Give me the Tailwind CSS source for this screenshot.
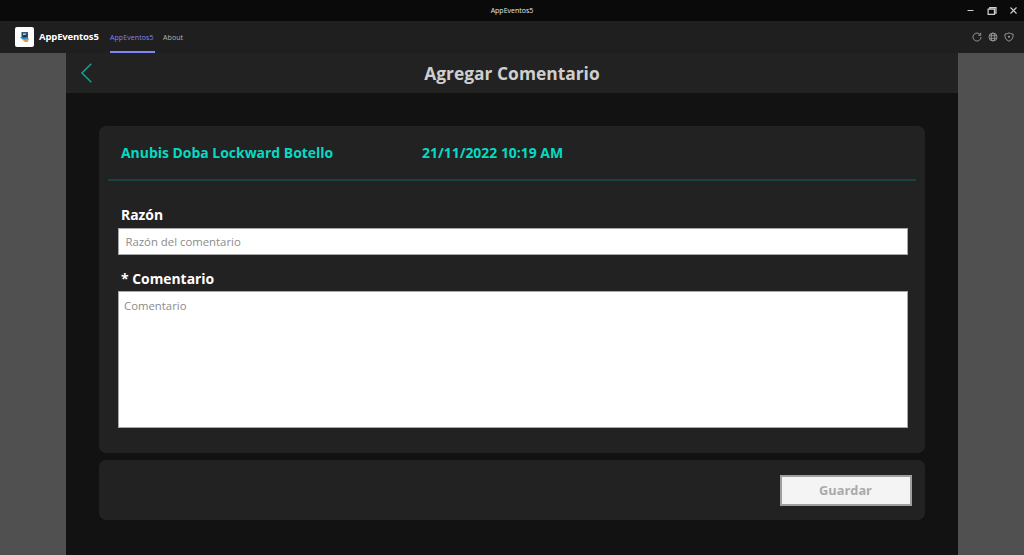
<!DOCTYPE html>
<html lang="es">
<head>
<meta charset="utf-8">
<title>AppEventos5</title>
<script src="https://cdn.jsdelivr.net/npm/@tailwindcss/browser@4"></script>
</head>
<body class="flex h-[555px] w-[1024px] flex-col overflow-hidden bg-[#505050] font-['Open_Sans','Noto_Sans',sans-serif] whitespace-nowrap">
  <header class="grid h-[21px] shrink-0 grid-cols-3 items-center bg-[#0a0a0a]">
    <span></span>
    <span class="text-center text-[7px] leading-none font-medium text-[#e8e8e8]">AppEventos5</span>
    <div class="flex items-center justify-end gap-[12px] pr-[6px] text-[#d0d0d0]">
      <svg class="h-[9px] w-[9px]" viewBox="0 0 9 9" fill="none" stroke="currentColor"><path d="M1.5 4.5h6"/></svg>
      <svg class="h-[10px] w-[10px]" viewBox="0 0 9 9" fill="none" stroke="currentColor" stroke-width="1.1"><path d="M1 2.8h5.7v4.8H1zM2.5 2.5V1.4h5.6v5H7"/></svg>
      <svg class="h-[9px] w-[9px]" viewBox="0 0 9 9" fill="none" stroke="currentColor" stroke-width="1.1"><path d="M1.5 1.5l6 6M7.5 1.5l-6 6"/></svg>
    </div>
  </header>
  <nav class="flex h-8 shrink-0 items-center bg-[#1f1f1f] pr-[10px] pl-[15px]">
    <div class="flex h-5 w-[19px] items-center justify-center rounded-[2px] bg-white">
      <svg class="h-[13px] w-[13px]" viewBox="0 0 12 12"><path d="M3.2 1h6v6h-6z" fill="#294b68"/><path d="M4.6 2.2h3L7 3.8H4.7z" fill="#b9d0dc"/><path d="M5 4.5l2-1 1 1.8-3 .5z" fill="#17324d"/><path d="M1.3 5.3l4 1 2.8-.8 2 2-2 1.5-3-.7z" fill="#3494bd"/><path d="M3.3 7.3l3.2.6 3.3-1-.5 3-2.6.5z" fill="#d99b54"/></svg>
    </div>
    <span class="ml-[5px] w-[71px] text-[9.5px] leading-none font-bold tracking-[-0.15px] text-white">AppEventos5</span>
    <div class="flex h-full w-[45px] items-center border-b-2 border-[#7f85f5] pt-[2px] text-[7px] leading-none font-medium text-[#7f85f5]"><span class="tracking-[0.08px]">AppEventos5</span></div>
    <span class="ml-[8px] text-[7px] leading-none font-medium tracking-[0.1px] text-[#b5b5b5]">About</span>
    <div class="ml-auto flex items-center gap-[6px] text-[#929292]">
      <svg class="h-[10px] w-[10px]" viewBox="0 0 10 10" fill="none" stroke="currentColor"><path d="M8.3 2.8A4 4 0 1 0 9 5M8.7.8v2.5H6.2"/></svg>
      <svg class="h-[10px] w-[10px]" viewBox="0 0 10 10" fill="none" stroke="currentColor"><circle cx="5" cy="5" r="4"/><ellipse cx="5" cy="5" rx="1.8" ry="4"/><path d="M1.2 3.7h7.6M1.2 6.3h7.6"/></svg>
      <svg class="h-[10px] w-[10px]" viewBox="0 0 10 10" fill="none" stroke="currentColor"><path d="M5 .8Q6.6 2 9 2v2.8Q9 7.6 5 9.3 1 7.6 1 4.8V2Q3.4 2 5 .8z"/><circle cx="5" cy="4.8" r="1.1" fill="currentColor" stroke="none"/></svg>
    </div>
  </nav>
  <main class="ml-[66px] flex w-[892px] flex-1 flex-col bg-[#121212]">
    <div class="grid h-[40px] shrink-0 grid-cols-[1fr_auto_1fr] items-center bg-[#222222]">
      <svg class="ml-[14px] h-5 w-[13px]" viewBox="0 0 13 20" fill="none" stroke="#12a293" stroke-width="1.5"><path d="M11.3.8L2 10l9.3 9.2"/></svg>
      <h1 class="pt-px text-[17.4px] leading-none font-bold text-[#cfcfcf]">Agregar Comentario</h1>
    </div>
    <section class="mt-[33px] ml-[33px] h-[326.5px] w-[825.5px] shrink-0 rounded-[7px] bg-[#222222] px-[9px]">
      <div class="flex h-[55px] items-center border-b-2 border-[#174443] pl-[13px] text-[13.95px] leading-none font-bold text-[#07d9c3]">
        <span class="w-[301px]">Anubis Doba Lockward Botello</span>
        <span>21/11/2022 10:19 AM</span>
      </div>
      <div class="flex flex-col px-[9.5px]">
        <label class="mt-[27px] ml-[3.5px] h-[20px] text-[13.9px] leading-[14px] font-bold text-white">Razón</label>
        <div class="flex h-[27px] w-[790px] items-center border border-[#a8a8a8] bg-white pl-[7px] text-[11.35px] leading-none text-[#8b8b8b]">Razón del comentario</div>
        <label class="mt-[17px] ml-[3.5px] h-[19px] text-[13.9px] leading-[14px] font-bold text-white">* Comentario</label>
        <div class="h-[137px] w-[790px] border border-[#a8a8a8] bg-white pt-[8px] pl-[5.5px] text-[11.35px] leading-none text-[#8b8b8b]">Comentario</div>
      </div>
    </section>
    <section class="mt-[7.5px] ml-[33px] flex h-[60px] w-[825.5px] shrink-0 items-center justify-end rounded-[7px] bg-[#222222] pr-[13px]">
      <button class="h-[31px] w-[132px] border-2 border-[#9f9f9f] bg-[#f4f4f4] pt-px text-[12.8px] leading-none font-bold text-[#aaaaaa]">Guardar</button>
    </section>
  </main>
</body>
</html>
